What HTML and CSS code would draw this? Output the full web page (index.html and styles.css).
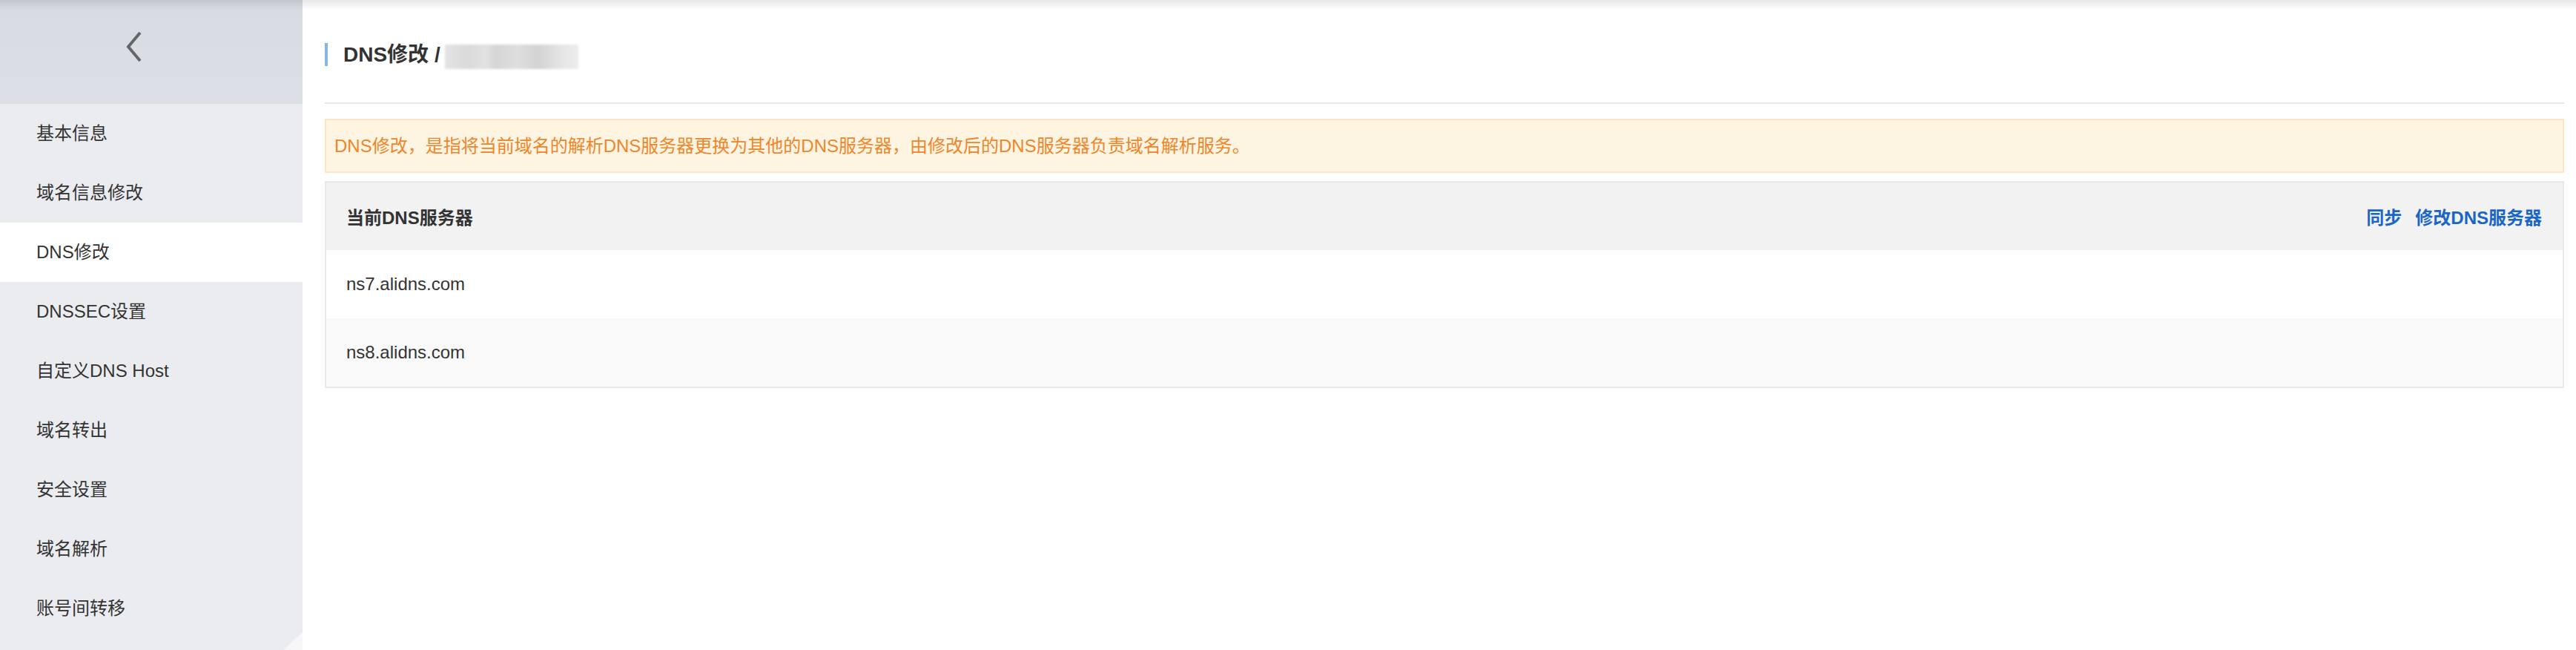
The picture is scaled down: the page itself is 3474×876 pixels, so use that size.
FILE: index.html
```html
<!DOCTYPE html>
<html lang="zh-CN">
<head>
<meta charset="utf-8">
<title>DNS修改</title>
<link rel="stylesheet" href="styles.css">
</head>
<body>
<div class="top-shadow"></div>
<div class="app">
  <aside class="sidebar">
    <div class="sidebar-head">
      <svg class="back" width="26" height="44" viewBox="0 0 26 44"><polyline points="20,3 4,22 20,41" fill="none" stroke="#666" stroke-width="4"/></svg>
    </div>
    <nav class="menu">
      <div class="menu-item">基本信息</div>
      <div class="menu-item">域名信息修改</div>
      <div class="menu-item active">DNS修改</div>
      <div class="menu-item">DNSSEC设置</div>
      <div class="menu-item">自定义DNS Host</div>
      <div class="menu-item">域名转出</div>
      <div class="menu-item">安全设置</div>
      <div class="menu-item">域名解析</div>
      <div class="menu-item">账号间转移</div>
    </nav>
  </aside>
  <main class="main">
    <header class="page-head">
      <h1 class="title">DNS修改 /<span class="blurred"></span></h1>
    </header>
    <div class="alert">DNS修改，是指将当前域名的解析DNS服务器更换为其他的DNS服务器，由修改后的DNS服务器负责域名解析服务。</div>
    <section class="table">
      <div class="table-head">
        <span class="head-text">当前DNS服务器</span>
        <div class="actions">
          <a class="link">同步</a>
          <a class="link">修改DNS服务器</a>
        </div>
      </div>
      <div class="row"><span class="row-text">ns7.alidns.com</span></div>
      <div class="row alt"><span class="row-text">ns8.alidns.com</span></div>
    </section>
  </main>
</div>
</body>
</html>
```
FILE: styles.css
```css
* { box-sizing: border-box; }
html, body { margin: 0; padding: 0; }
body {
  font-family: "Liberation Sans", "Noto Sans CJK SC", sans-serif;
  color: #333;
  background: #fff;
  width: 3474px;
  height: 876px;
  overflow: hidden;
  position: relative;
}
.top-shadow {
  position: absolute;
  left: 0; top: 0; right: 0;
  height: 14px;
  background: linear-gradient(to bottom, rgba(0,0,0,0.09), rgba(0,0,0,0));
  pointer-events: none;
  z-index: 5;
}
.app { display: flex; height: 876px; }
.sidebar {
  width: 408px;
  flex: none;
  background: #ebecf0;
  position: relative;
}
.sidebar::after {
  content: "";
  position: absolute;
  right: 0; bottom: 0;
  width: 26px; height: 24px;
  background: #f7f7f9;
  clip-path: polygon(0 100%, 100% 0, 100% 100%);
}
.sidebar-head {
  height: 140px;
  background: linear-gradient(to bottom, #d7dbe2, #dcdfe6);
  display: flex;
  align-items: center;
  padding-left: 169px;
  padding-bottom: 14px;
}
.back { display: block; }
.menu { display: flex; flex-direction: column; }
.menu-item {
  height: 80px;
  line-height: 80px;
  padding-left: 49px;
  font-size: 24px;
  color: #333;
}
.menu-item.active { background: #fff; }
.main {
  flex: 1;
  padding: 0 16px 0 30px;
}
.page-head {
  height: 140px;
  padding-top: 58px;
  border-bottom: 2px solid #e8e8e8;
}
.title {
  margin: 0;
  height: 31px;
  border-left: 4px solid #88b8e2;
  padding-left: 21px;
  font-size: 28px;
  line-height: 31px;
  font-weight: bold;
  color: #333;
  display: flex;
  align-items: center;
}
.blurred {
  display: inline-block;
  width: 180px;
  height: 33px;
  margin-left: 6px;
  margin-top: 6px;
  background: linear-gradient(to right, #e4e4e4 0, #dadada 17%, #e2e2e2 30%, #d5d5d5 38%, #dedede 54%, #d3d3d3 70%, #e6e6e6 88%, #ececec 100%);
  filter: blur(1.5px);
}
.alert {
  margin-top: 20px;
  height: 73px;
  border: 2px solid #fbe6c4;
  background: #fdf5e2;
  color: #f0852a;
  font-size: 24px;
  line-height: 69px;
  padding-left: 11px;
  white-space: nowrap;
}
.table {
  margin-top: 11px;
  border: 2px solid #e9e9e9;
}
.table-head {
  height: 91px;
  background: #f2f2f2;
  display: flex;
  align-items: center;
  justify-content: space-between;
  padding: 0 28px 0 27px;
}
.head-text {
  font-size: 24px;
  font-weight: bold;
  color: #333;
}
.actions { display: flex; gap: 18px; }
.link {
  color: #1a66c8;
  font-weight: bold;
  font-size: 24px;
  cursor: pointer;
}
.row {
  height: 92px;
  display: flex;
  align-items: center;
  padding-left: 27px;
  background: #fff;
}
.row.alt { background: #f9f9f9; }
.row-text {
  font-size: 24px;
  color: #333;
}
```
